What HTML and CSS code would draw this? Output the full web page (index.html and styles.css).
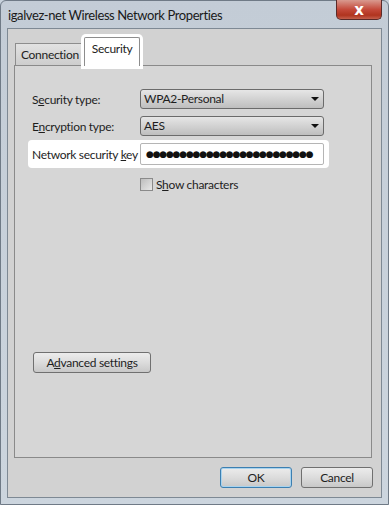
FILE: index.html
```html
<!DOCTYPE html>
<html lang="en">
<head>
    <meta charset="utf-8">
    <title>igalvez-net Wireless Network Properties</title>
    <link rel="stylesheet" href="styles.css">
</head>
<body>
    <div class="window">
        <div class="titlebar">
            <span class="title">igalvez-net Wireless Network Properties</span>
            <button class="closeButton">x</button>
        </div>
        <div class="client">
            <div class="tabs">
                <div class="tab">Connection</div>
                <div class="tab activeTab">Security</div>
            </div>
            <div class="panel">
                <div class="row">
                    <label>S<u>e</u>curity type:</label>
                    <div class="select">WPA2-Personal<span class="arrow"></span></div>
                </div>
                <div class="row">
                    <label>E<u>n</u>cryption type:</label>
                    <div class="select">AES<span class="arrow"></span></div>
                </div>
                <div class="row keyRow">
                    <label>Network security <u>k</u>ey</label>
                    <div class="keyInput">●●●●●●●●●●●●●●●●●●●●●●●●●</div>
                </div>
                <div class="checkRow">
                    <span class="checkbox"></span>
                    <span>S<u>h</u>ow characters</span>
                </div>
                <button class="advancedButton">A<u>d</u>vanced settings</button>
            </div>
            <div class="footer">
                <button class="okButton">OK</button>
                <button>Cancel</button>
            </div>
        </div>
    </div>
</body>
</html>
```

FILE: styles.css
```css
body{
    margin: 0;
    padding: 0;
    background-color: #c8d2dc;
    font-family: Lato, "Open Sans", sans-serif;
    font-size: 12px;
    letter-spacing: -0.3px;
    color: #1e1e1e;
}
.window{
    width: 389px;
    height: 505px;
    box-sizing: border-box;
    background: linear-gradient(#c3ccd6, #ccd5de);
    border: 1px solid #6f7a86;
    border-radius: 6px 6px 0 0;
    display: flex;
    flex-direction: column;
}
.titlebar{
    height: 27px;
    display: flex;
    align-items: flex-start;
    justify-content: space-between;
    padding-left: 7px;
}
.title{
    font-size: 13px;
    letter-spacing: -0.4px;
    margin-top: 6px;
    color: #1a1a1a;
}
.closeButton{
    width: 46px;
    height: 20px;
    margin-top: -1px;
    margin-right: 6px;
    border: 1px solid #5a2a28;
    border-top: none;
    border-radius: 0 0 5px 5px;
    background: linear-gradient(#d99a8f, #c4493a 50%, #b0341f 80%, #c45f4c);
    color: white;
    font-family: "DejaVu Sans", sans-serif;
    font-weight: bold;
    font-size: 15px;
    line-height: 16px;
    letter-spacing: 0;
    padding: 0;
}
.client{
    flex: 1;
    margin: 0 6px 6px 6px;
    background-color: #d2d2d2;
    border: 1px solid #7e8994;
    padding: 13px 9px 0 6px;
    display: flex;
    flex-direction: column;
}
.tabs{
    display: flex;
    align-items: flex-end;
    height: 23px;
    padding-left: 1px;
    position: relative;
    z-index: 1;
}
.tab{
    height: 22px;
    padding: 0 5px 0 5px;
    box-sizing: border-box;
    border: 1px solid #8d8d8d;
    border-bottom: none;
    background: linear-gradient(#e2e2e2, #cdcdcd);
    line-height: 22px;
    color: #222;
}
.activeTab{
    height: 29px;
    padding: 0 7px 0 7px;
    margin-left: -1px;
    margin-bottom: -1px;
    background: white;
    line-height: 22px;
    box-shadow: 0 0 0 3px white;
    border-radius: 2px 2px 0 0;
}
.panel{
    height: 393px;
    box-sizing: border-box;
    border: 1px solid #8a8a8a;
    background-color: #d6d6d6;
    padding: 23px 0 0 17px;
    display: flex;
    flex-direction: column;
}
.row{
    display: flex;
    align-items: center;
    height: 20px;
    margin-bottom: 7px;
}
.row label{
    width: 108px;
    flex-shrink: 0;
    white-space: nowrap;
}
.select{
    width: 184px;
    height: 20px;
    box-sizing: border-box;
    border: 1px solid #6b6b6b;
    border-radius: 3px;
    background: linear-gradient(#e6e6e6, #d2d2d2 50%, #bebebe);
    padding-left: 3px;
    line-height: 18px;
    display: flex;
    justify-content: space-between;
    align-items: center;
}
.arrow{
    width: 0;
    height: 0;
    border-left: 4px solid transparent;
    border-right: 4px solid transparent;
    border-top: 4px solid #111;
    margin-right: 4px;
}
.keyRow{
    height: 28px;
    margin-left: -4px;
    padding-left: 4px;
    width: 301px;
    box-sizing: border-box;
    background: white;
    border-radius: 4px;
    margin-top: -3px;
    margin-bottom: 9px;
}
.keyInput{
    width: 184px;
    height: 22px;
    box-sizing: border-box;
    border: 1px solid #b5b5b5;
    border-radius: 2px;
    padding-left: 5px;
    font-family: "DejaVu Sans", sans-serif;
    font-size: 9px;
    letter-spacing: -1.2px;
    line-height: 20px;
    color: #111;
    overflow: hidden;
    white-space: nowrap;
}
.checkRow{
    display: flex;
    align-items: center;
    margin-left: 108px;
    gap: 3px;
    height: 14px;
}
.checkbox{
    width: 11px;
    height: 11px;
    border: 1px solid #8a8a8a;
    background: linear-gradient(135deg, #bdbdbd, #e8e8e8);
}
button{
    font-family: Lato, "Open Sans", sans-serif;
    font-size: 12px;
    letter-spacing: -0.3px;
    color: #1e1e1e;
    width: 72px;
    height: 21px;
    border: 1px solid #707070;
    border-radius: 3px;
    background: linear-gradient(#ececec, #dcdcdc 50%, #c8c8c8);
    padding: 0;
    line-height: 18px;
}
.advancedButton{
    width: 118px;
    margin-top: 161px;
    margin-left: 1px;
}
.footer{
    display: flex;
    justify-content: flex-end;
    gap: 9px;
    margin-top: 9px;
    margin-right: -1px;
}
.okButton{
    border-color: #3c7fb1;
    box-shadow: inset 0 0 0 1px #a8d3ee;
}
u{
    text-decoration-thickness: 1px;
}
```
